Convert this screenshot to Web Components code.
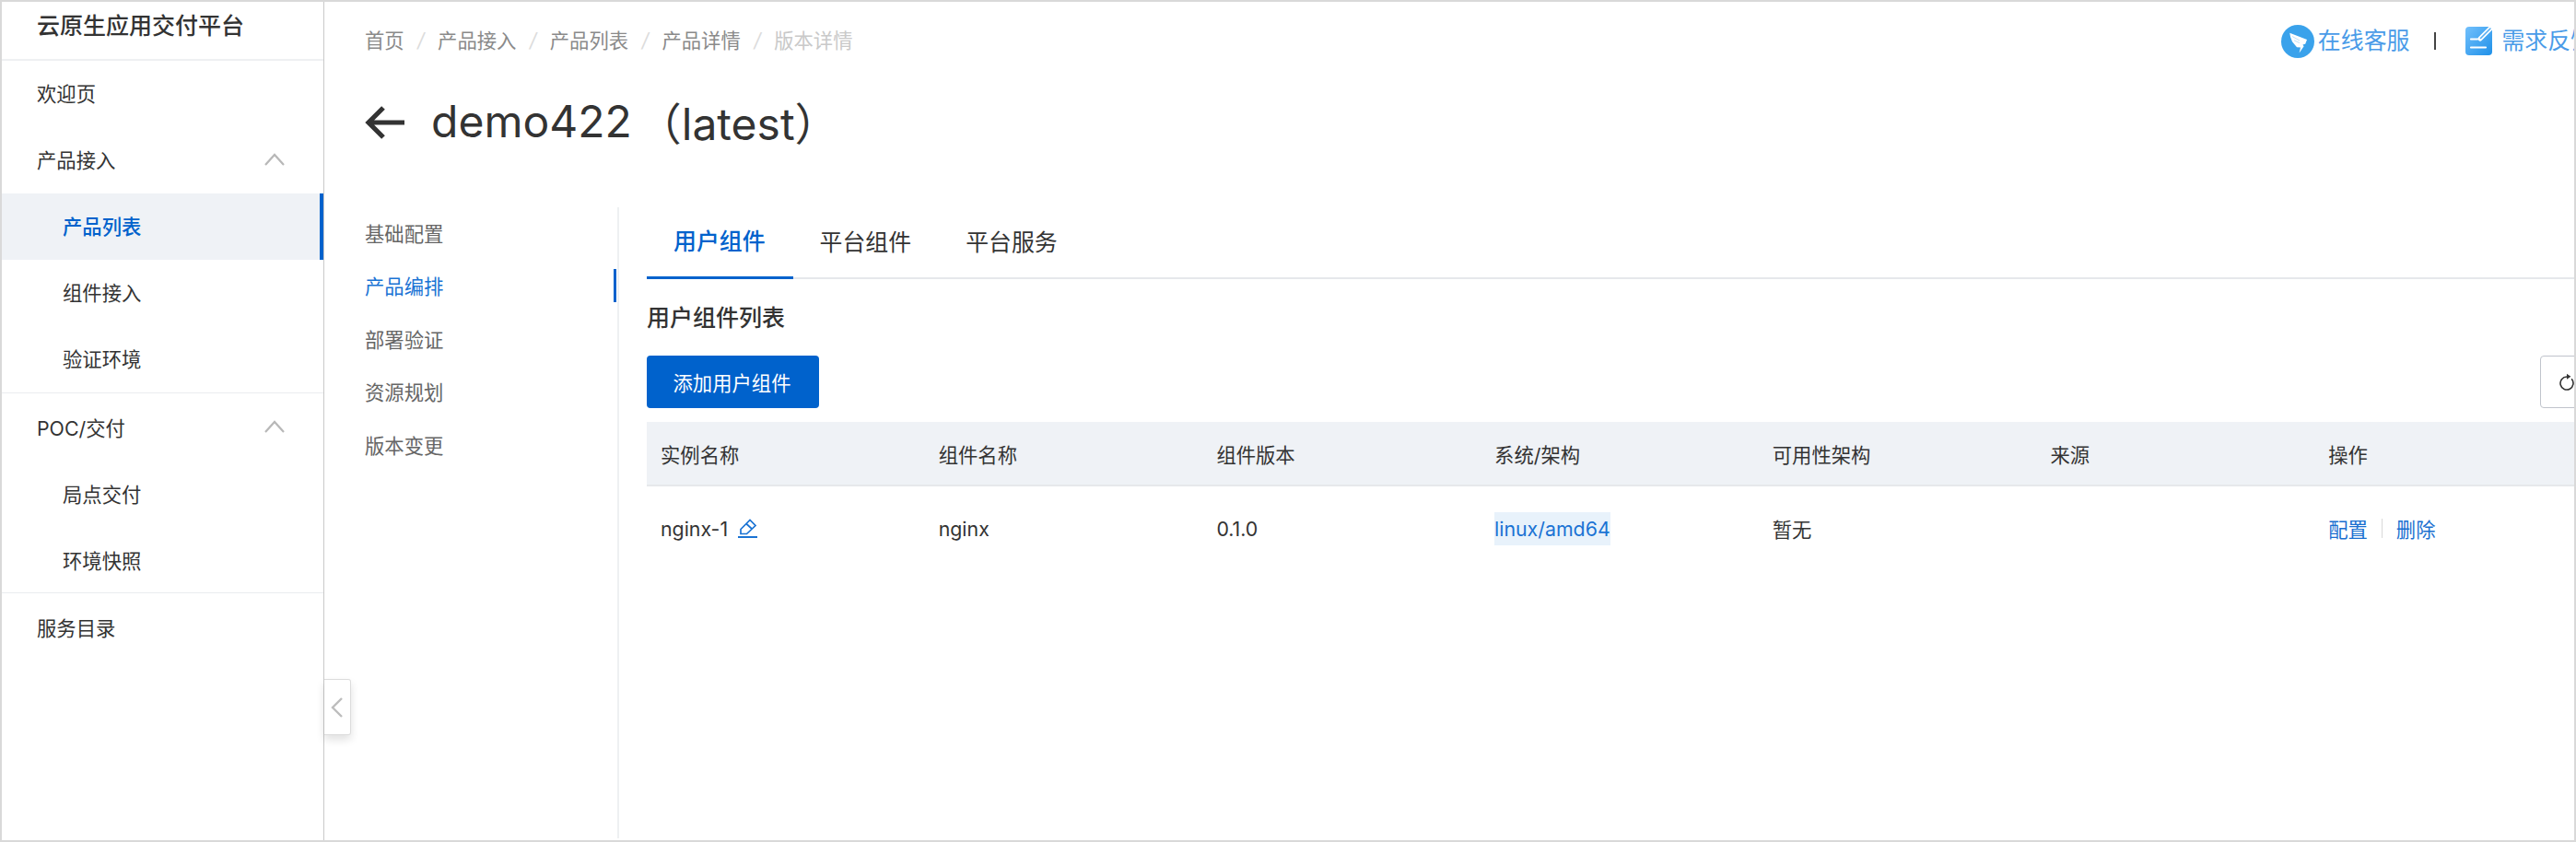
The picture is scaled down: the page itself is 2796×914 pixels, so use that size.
<!DOCTYPE html>
<html lang="zh-CN">
<head>
<meta charset="utf-8">
<title>云原生应用交付平台</title>
<style>
  html, body { margin: 0; padding: 0; background: #fff; }
  body { font-family: Inter, "Noto Sans CJK SC", sans-serif; color: #333; }
  .bracket { margin-left: 6px; }
</style>
</head>
<body>
<app-shell>
  <side-nav slot="nav" heading="云原生应用交付平台">
    <nav-group style="--item-shift: 3px">
      <nav-item>欢迎页</nav-item>
      <nav-item open>产品接入</nav-item>
      <nav-item sub active>产品列表</nav-item>
      <nav-item sub>组件接入</nav-item>
      <nav-item sub>验证环境</nav-item>
    </nav-group>
    <nav-group>
      <nav-item open>POC/交付</nav-item>
      <nav-item sub>局点交付</nav-item>
      <nav-item sub>环境快照</nav-item>
    </nav-group>
    <nav-item>服务目录</nav-item>
  </side-nav>

  <top-bar>
    <bread-crumb>
      <crumb-link>首页</crumb-link>
      <crumb-link>产品接入</crumb-link>
      <crumb-link>产品列表</crumb-link>
      <crumb-link>产品详情</crumb-link>
      <crumb-link current>版本详情</crumb-link>
    </bread-crumb>
    <top-links slot="right"></top-links>
  </top-bar>
  <page-title>demo422<span class="bracket">（latest）</span></page-title>

  <detail-layout>
    <side-tabs slot="side">
      <side-tab>基础配置</side-tab>
      <side-tab active>产品编排</side-tab>
      <side-tab>部署验证</side-tab>
      <side-tab>资源规划</side-tab>
      <side-tab>版本变更</side-tab>
    </side-tabs>

    <tab-bar>
      <tab-item active>用户组件</tab-item>
      <tab-item>平台组件</tab-item>
      <tab-item>平台服务</tab-item>
    </tab-bar>
    <section-title>用户组件列表</section-title>
    <table-toolbar>
      <primary-button>添加用户组件</primary-button>
    </table-toolbar>
    <component-table></component-table>
  </detail-layout>
  <collapse-handle slot="overlay"></collapse-handle>
</app-shell>

<script>
function define(name, html, setup) {
  const template = document.createElement('template');
  template.innerHTML = html;
  customElements.define(name, class extends HTMLElement {
    constructor() {
      super();
      this.attachShadow({ mode: 'open' }).appendChild(template.content.cloneNode(true));
      if (setup) setup(this);
    }
  });
}

define('app-shell', `
  <style>
    :host {
      display: flex;
      position: relative;
      box-sizing: border-box;
      width: 2796px;
      height: 914px;
      border: 2px solid #d9d9d9;
      background: #fff;
      overflow: hidden;
    }
    .main { flex: 1; min-width: 0; overflow: hidden; }
  </style>
  <slot name="nav"></slot>
  <div class="main"><slot></slot></div>
  <slot name="overlay"></slot>
`);

define('side-nav', `
  <style>
    :host {
      display: block;
      flex: none;
      box-sizing: border-box;
      width: 350px;
      border-right: 1px solid #c9c9c9;
    }
    .logo {
      box-sizing: border-box;
      height: 64px;
      padding: 4px 0 0 38px;
      font-size: 25px;
      font-weight: 500;
      line-height: 44px;
      color: #333;
      border-bottom: 2px solid #eef0f2;
    }
  </style>
  <div class="logo"></div>
  <slot></slot>
`, (el) => {
  el.shadowRoot.querySelector('.logo').textContent = el.getAttribute('heading');
});

define('nav-group', `
  <style>
    :host { display: block; border-bottom: 1px solid #eaecef; }
  </style>
  <slot></slot>
`);

define('nav-item', `
  <style>
    :host {
      display: flex;
      align-items: center;
      justify-content: space-between;
      box-sizing: border-box;
      height: 72px;
      padding: 0 41px var(--item-shift, 0) 38px;
      font-size: 21.33px;
      color: #333;
    }
    :host([sub]) { padding-left: 66px; }
    :host([active]) {
      background: #eff2f6;
      color: #0062cc;
      font-weight: 500;
      border-right: 4px solid #0062cc;
    }
    svg { display: none; width: 24px; height: 14px; }
    :host([open]) svg { display: block; }
  </style>
  <slot></slot>
  <svg viewBox="0 0 24 14"><path d="M2 13 L12 2 L22 13" fill="none" stroke="#b8b8b8" stroke-width="2.2"/></svg>
`);

define('top-bar', `
  <style>
    :host {
      display: flex;
      align-items: center;
      justify-content: space-between;
      box-sizing: border-box;
      height: 84px;
      padding: 0 0 3px 44px;
    }
  </style>
  <slot></slot>
  <slot name="right"></slot>
`);

define('bread-crumb', `
  <style>
    :host { display: flex; align-items: center; }
  </style>
  <slot></slot>
`);

define('crumb-link', `
  <style>
    :host {
      display: inline-flex;
      align-items: center;
      font-size: 21.33px;
      color: #8a8a8a;
    }
    :host([current]) { color: #c9c9c9; }
    :host([current]) .sep { display: none; }
    .sep { margin: 0 14.35px; color: #dcdcdc; font-size: 21.33px; font-style: italic; }
  </style>
  <slot></slot><span class="sep">/</span>
`);

define('top-links', `
  <style>
    :host {
      display: flex;
      align-items: center;
      flex: none;
      margin: 4px -21px 0 0;
      font-size: 24.9px;
      color: #4a9be8;
    }
    svg { display: block; flex: none; }
    .text { margin-left: 4px; margin-top: -5px; white-space: nowrap; }
    .bar { width: 2px; height: 19px; margin: 0 32px 0 27px; background: #444; }
    .note { margin-left: 8px; }
  </style>
  <svg width="36" height="36" viewBox="0 0 36 36">
    <circle cx="18" cy="18" r="18" fill="#3aa2eb"/>
    <path d="M9.3 8.7 L28 16 L26.2 20.8 L23.4 21.6 L24.6 23.2 L19.6 30.4 L21 24.4 L17 24.2 L12 18.2 L10 13 Z" fill="#fff"/>
    <path d="M12 12.5 L20 17 M14 16.8 L20 19.6" stroke="#bfe0f8" stroke-width="1" fill="none"/>
  </svg>
  <span class="text">在线客服</span>
  <span class="bar"></span>
  <svg width="31" height="33" viewBox="0 0 31 33">
    <defs>
      <linearGradient id="noteFill" x1="0" y1="0" x2="1" y2="1">
        <stop offset="0" stop-color="#72c0fc"/>
        <stop offset="1" stop-color="#1f90e8"/>
      </linearGradient>
    </defs>
    <rect x="0" y="1" width="29" height="31" rx="4" fill="url(#noteFill)"/>
    <path d="M16 14 L27 3" stroke="#fff" stroke-width="5" stroke-linecap="round"/>
    <path d="M16.5 13.5 L27 3" stroke="#58aef2" stroke-width="1.6" stroke-linecap="round"/>
    <path d="M6 14.5 H13 M6 23.5 H22" stroke="#fff" stroke-width="2.2" stroke-linecap="round"/>
  </svg>
  <span class="text note">需求反馈</span>
`);

define('page-title', `
  <style>
    :host {
      display: flex;
      align-items: center;
      box-sizing: border-box;
      height: 96px;
      padding: 0 0 6px 44px;
      font-size: 48px;
      color: #333;
    }
    svg { display: block; flex: none; margin: 3px 28px 0 0; }
  </style>
  <svg width="44" height="36" viewBox="0 0 44 36">
    <path d="M20 2 L4 18 L20 34 M4 18 H43" fill="none" stroke="#333" stroke-width="5.2"/>
  </svg>
  <slot></slot>
`);

define('detail-layout', `
  <style>
    :host { display: flex; margin-top: 43px; height: 685px; overflow: hidden; }
    .panel { width: 2112px; flex: none; margin-left: 30px; }
  </style>
  <slot name="side"></slot>
  <div class="panel"><slot></slot></div>
`);

define('side-tabs', `
  <style>
    :host {
      display: flex;
      flex-direction: column;
      gap: 21.6px;
      flex: none;
      box-sizing: border-box;
      width: 320px;
      padding: 9px 1px 0 44px;
      border-right: 2px solid #eef0f2;
    }
  </style>
  <slot></slot>
`);

define('side-tab', `
  <style>
    :host {
      display: flex;
      align-items: center;
      box-sizing: border-box;
      height: 36px;
      font-size: 21.33px;
      color: #666;
      border-right: 3px solid transparent;
    }
    :host([active]) { color: #1a73d4; border-right-color: #0062cc; }
  </style>
  <slot></slot>
`);

define('tab-bar', `
  <style>
    :host {
      display: flex;
      box-sizing: border-box;
      height: 78px;
      border-bottom: 2px solid #e6e8eb;
    }
  </style>
  <slot></slot>
`);

define('tab-item', `
  <style>
    :host {
      display: flex;
      align-items: center;
      box-sizing: border-box;
      height: 76px;
      padding: 0 30px 4px 29px;
      font-size: 24.9px;
      color: #333;
    }
    :host([active]) {
      height: 78px;
      padding-bottom: 6px;
      color: #0062cc;
      font-weight: 500;
      border-bottom: 3px solid #0062cc;
    }
  </style>
  <slot></slot>
`);

define('section-title', `
  <style>
    :host {
      display: block;
      margin-top: 22px;
      height: 40px;
      line-height: 40px;
      font-size: 25px;
      font-weight: 500;
      color: #333;
    }
  </style>
  <slot></slot>
`);

define('table-toolbar', `
  <style>
    :host {
      display: flex;
      justify-content: space-between;
      margin-top: 21px;
    }
    button {
      width: 57px;
      height: 57px;
      padding: 0;
      background: #fff;
      border: 1px solid #c0c4cc;
      border-radius: 4px;
      display: flex;
      align-items: center;
      justify-content: center;
    }
  </style>
  <slot></slot>
  <button aria-label="刷新">
    <svg width="18" height="20" viewBox="0 0 18 20">
      <path d="M9 4 A7 7 0 1 0 14.2 6.3" fill="none" stroke="#333" stroke-width="1.6"/>
      <path d="M9 0.8 L13.4 3.8 L9 6.8 Z" fill="#333"/>
    </svg>
  </button>
`);

define('primary-button', `
  <style>
    :host {
      display: flex;
      align-items: center;
      justify-content: center;
      box-sizing: border-box;
      width: 187px;
      height: 57px;
      padding-right: 2px;
      font-size: 21.33px;
      color: #fff;
      background: #0062cc;
      border-radius: 4px;
    }
  </style>
  <slot></slot>
`);

define('component-table', `
  <style>
    :host { display: block; margin-top: 15px; font-size: 21.33px; color: #333; }
    .row {
      display: grid;
      grid-template-columns: repeat(7, 301.7px);
      align-items: center;
    }
    .head {
      height: 70px;
      box-sizing: border-box;
      background: #eff2f6;
      border-bottom: 2px solid #e6e8eb;
    }
    .body { height: 92px; }
    .row > div { padding-left: 15px; white-space: nowrap; }
    .name { display: flex; align-items: center; gap: 11px; }
    .name svg { display: block; margin-top: -1px; }
    .tag {
      display: inline-block;
      height: 36px;
      line-height: 36px;
      color: #1a73d4;
      background: #e8f2fb;
    }
    .cjk { margin-top: -2px; }
    .ops { display: flex; align-items: center; color: #1a6fd0; }
    .ops i { width: 1px; height: 21px; margin: 0 15px; background: #d9d9d9; }
  </style>
  <div class="row head">
    <div>实例名称</div><div>组件名称</div><div>组件版本</div><div>系统/架构</div><div>可用性架构</div><div>来源</div><div>操作</div>
  </div>
  <div class="row body">
    <div class="name">nginx-1
      <svg width="21" height="21" viewBox="0 0 21 21">
        <path d="M3 11.5 L13 1.5 L19 7.5 L9.5 16.5 H3 Z M9 5.5 L15 11" fill="none" stroke="#1a73d4" stroke-width="1.7"/>
        <path d="M0 20 H21" stroke="#1a73d4" stroke-width="2"/>
      </svg>
    </div>
    <div>nginx</div>
    <div>0.1.0</div>
    <div><span class="tag">linux/amd64</span></div>
    <div class="cjk">暂无</div>
    <div></div>
    <div class="ops cjk">配置<i></i>删除</div>
  </div>
`);

define('collapse-handle', `
  <style>
    :host {
      position: absolute;
      left: 350px;
      top: 735px;
      display: flex;
      align-items: center;
      justify-content: center;
      box-sizing: border-box;
      width: 29px;
      height: 61px;
      background: #fff;
      border: 1px solid #dcdcdc;
      border-left: 0;
      border-radius: 0 3px 3px 0;
      box-shadow: 0 5px 10px rgba(0, 0, 0, 0.12);
    }
  </style>
  <svg width="14" height="22" viewBox="0 0 14 22">
    <path d="M12 1 L2 11 L12 21" fill="none" stroke="#bdbdbd" stroke-width="2.4"/>
  </svg>
`);
</script>
</body>
</html>
